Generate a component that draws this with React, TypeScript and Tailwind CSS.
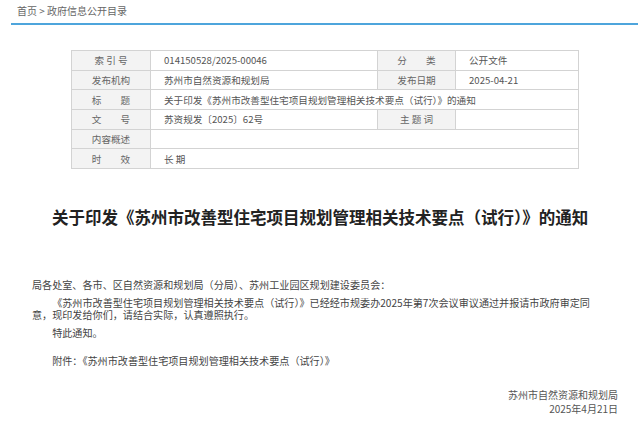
const font = { fontFamily: '"Noto Sans CJK SC", "Noto Sans", sans-serif' };

const labelCls =
  "border border-[#d3d3d3] bg-[#f3f3f3] text-center text-[#666] whitespace-pre";
const valueCls = "border border-[#d3d3d3] bg-white pl-[13px] text-[#555]";

export default function App() {
  return (
    <div className="min-h-[437px] w-[640px] bg-white" style={font}>
      {/* breadcrumb */}
      <div className="ml-[11px] mr-[2px] h-[25px] border-b-2 border-[#4ea5dc] pl-[6px] pt-[4px] text-[10px] leading-[14px] text-[#666]">
        首页&nbsp;&gt;&nbsp;政府信息公开目录
      </div>

      {/* meta table */}
      <div className="mt-[25px] flex justify-start pl-[71px]">
        <table className="w-[507px] table-fixed border-collapse text-[9.6px] leading-[12px]">
          <colgroup>
            <col className="w-[79px]" />
            <col className="w-[227px]" />
            <col className="w-[78px]" />
            <col className="w-[123px]" />
          </colgroup>
          <tbody>
            <tr className="h-[19.7px]">
              <td className={labelCls}>索 引 号</td>
              <td className={valueCls}>014150528/2025-00046</td>
              <td className={labelCls}>分　　类</td>
              <td className={valueCls}>公开文件</td>
            </tr>
            <tr className="h-[19.7px]">
              <td className={labelCls}>发布机构</td>
              <td className={valueCls}>苏州市自然资源和规划局</td>
              <td className={labelCls}>发布日期</td>
              <td className={valueCls}>2025-04-21</td>
            </tr>
            <tr className="h-[19.7px]">
              <td className={labelCls}>标　　题</td>
              <td className={valueCls} colSpan={3}>
                关于印发《苏州市改善型住宅项目规划管理相关技术要点（试行）》的通知
              </td>
            </tr>
            <tr className="h-[19.7px]">
              <td className={labelCls}>文　　号</td>
              <td className={valueCls}>苏资规发〔2025〕62号</td>
              <td className={labelCls}>主 题 词</td>
              <td className={valueCls}></td>
            </tr>
            <tr className="h-[19.7px]">
              <td className={labelCls}>内容概述</td>
              <td className={valueCls} colSpan={3}></td>
            </tr>
            <tr className="h-[19.7px]">
              <td className={labelCls}>时　　效</td>
              <td className={valueCls} colSpan={3}>长 期</td>
            </tr>
          </tbody>
        </table>
      </div>

      {/* title */}
      <h1 className="mt-[36px] text-center text-[16.5px] font-bold leading-[24px] text-[#222]">
        关于印发《苏州市改善型住宅项目规划管理相关技术要点（试行）》的通知
      </h1>

      {/* body */}
      <div className="ml-[32px] mt-[50px] w-[570px] text-[10.1px] leading-[12px] text-[#444]">
        <p>局各处室、各市、区自然资源和规划局（分局）、苏州工业园区规划建设委员会：</p>
        <p className="mt-[6px] indent-[2em]">
          《苏州市改善型住宅项目规划管理相关技术要点（试行）》已经经市规委办2025年第7次会议审议通过并报请市政府审定同意，现印发给你们，请结合实际，认真遵照执行。
        </p>
        <p className="mt-[6px] indent-[2em]">特此通知。</p>
        <p className="mt-[16px] indent-[2em]">附件：《苏州市改善型住宅项目规划管理相关技术要点（试行）》</p>
      </div>

      {/* signature */}
      <div className="mr-[22px] mt-[21px] flex flex-col items-end text-[10px] leading-[14px] text-[#555]">
        <span>苏州市自然资源和规划局</span>
        <span>2025年4月21日</span>
      </div>
    </div>
  );
}
